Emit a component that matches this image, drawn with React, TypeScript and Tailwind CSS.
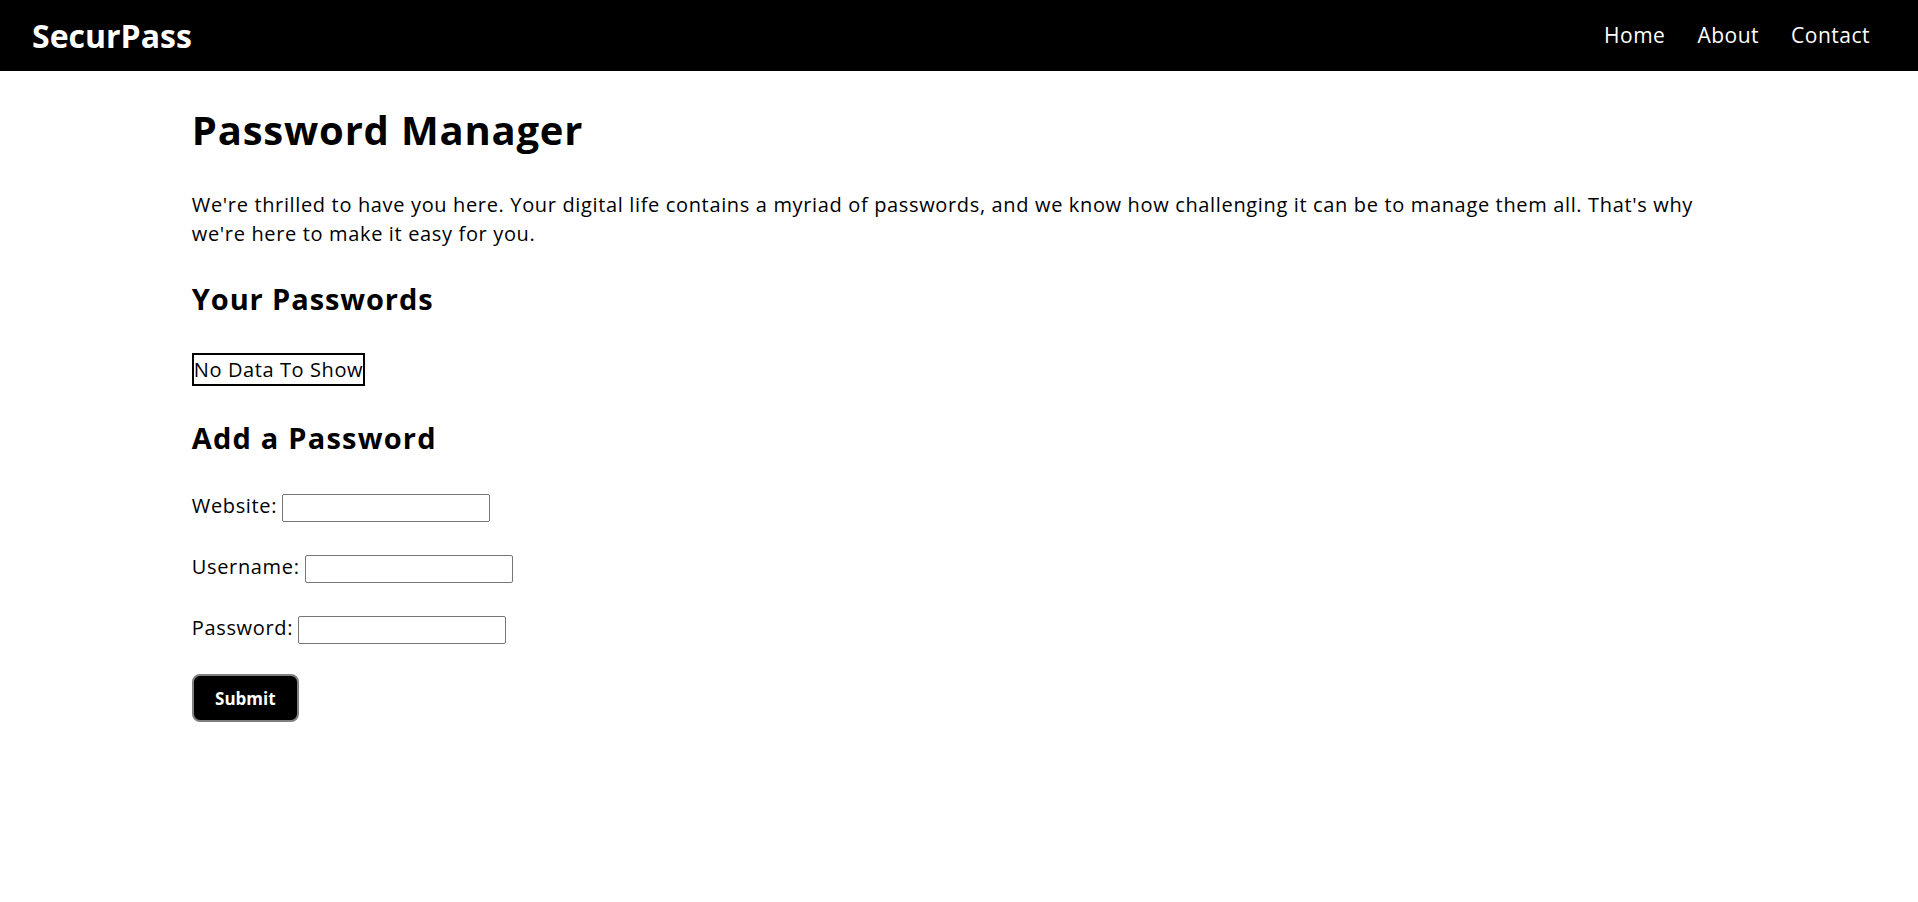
import React, { useState } from 'react';

type Entry = { website: string; username: string; password: string };

export default function App() {
  const [entries, setEntries] = useState<Entry[]>([]);
  const [website, setWebsite] = useState('');
  const [username, setUsername] = useState('');
  const [password, setPassword] = useState('');

  const handleSubmit = (e: React.FormEvent) => {
    e.preventDefault();
    if (!website || !username || !password) return;
    setEntries(prev => [...prev, { website, username, password }]);
    setWebsite('');
    setUsername('');
    setPassword('');
  };

  return (
    <div className="min-h-screen bg-white text-black font-['Open_Sans',sans-serif]">
      <nav className="h-[71px] bg-black text-white flex items-center justify-between pl-[32px] pr-[48px]">
        <div className="text-[32px] font-bold leading-none">SecurPass</div>
        <ul className="flex items-center gap-[32px] text-[21px] tracking-[0.5px]">
          <li><a href="#">Home</a></li>
          <li><a href="#">About</a></li>
          <li><a href="#">Contact</a></li>
        </ul>
      </nav>

      <main className="w-[80%] mx-auto pt-[29px]">
        <h1 className="text-[40px] font-bold leading-[60px] tracking-[0.8px]">Password Manager</h1>
        <p className="mt-[30px] text-[20px] leading-[29px] tracking-[0.65px]">
          We're thrilled to have you here. Your digital life contains a myriad of passwords, and we know how challenging it can be to manage them all. That's why we're here to make it easy for you.
        </p>

        <h2 className="mt-[29px] text-[29px] font-bold leading-[44px] tracking-[0.9px]">Your Passwords</h2>
        <div className="mt-[32px]">
          {entries.length === 0 ? (
            <span className="inline-block border-2 border-black text-[20px] leading-[29px] tracking-[0.6px]">No Data To Show</span>
          ) : (
            <table className="border-2 border-black text-[20px] leading-[29px]">
              <thead>
                <tr>
                  <th className="border border-black px-2">Website</th>
                  <th className="border border-black px-2">Username</th>
                  <th className="border border-black px-2">Password</th>
                </tr>
              </thead>
              <tbody>
                {entries.map((item, i) => (
                  <tr key={i}>
                    <td className="border border-black px-2">{item.website}</td>
                    <td className="border border-black px-2">{item.username}</td>
                    <td className="border border-black px-2">{item.password}</td>
                  </tr>
                ))}
              </tbody>
            </table>
          )}
        </div>

        <h2 className="mt-[30px] text-[29px] font-bold leading-[44px] tracking-[1.2px]">Add a Password</h2>
        <form onSubmit={handleSubmit} className="mt-[31px] flex flex-col items-start gap-[30px] text-[20px] leading-[29px] tracking-[0.65px]">
          <div className="flex items-start">
            <label htmlFor="website">Website:</label>
            <input
              id="website"
              type="text"
              value={website}
              onChange={e => setWebsite(e.target.value)}
              className="ml-[5px] mt-[3px] w-[208px] h-[28px] border border-[#767676] rounded-[2px] px-1 text-[14px] tracking-normal"
            />
          </div>
          <div className="flex items-start">
            <label htmlFor="username">Username:</label>
            <input
              id="username"
              type="text"
              value={username}
              onChange={e => setUsername(e.target.value)}
              className="ml-[5px] mt-[3px] w-[208px] h-[28px] border border-[#767676] rounded-[2px] px-1 text-[14px] tracking-normal"
            />
          </div>
          <div className="flex items-start">
            <label htmlFor="password">Password:</label>
            <input
              id="password"
              type="password"
              value={password}
              onChange={e => setPassword(e.target.value)}
              className="ml-[5px] mt-[3px] w-[208px] h-[28px] border border-[#767676] rounded-[2px] px-1 text-[14px] tracking-normal"
            />
          </div>
          <button
            type="submit"
            className="w-[107px] h-[48px] bg-black text-white text-[17px] font-bold tracking-normal border-2 border-[#808080] rounded-[8px]"
          >
            Submit
          </button>
        </form>
      </main>
    </div>
  );
}
